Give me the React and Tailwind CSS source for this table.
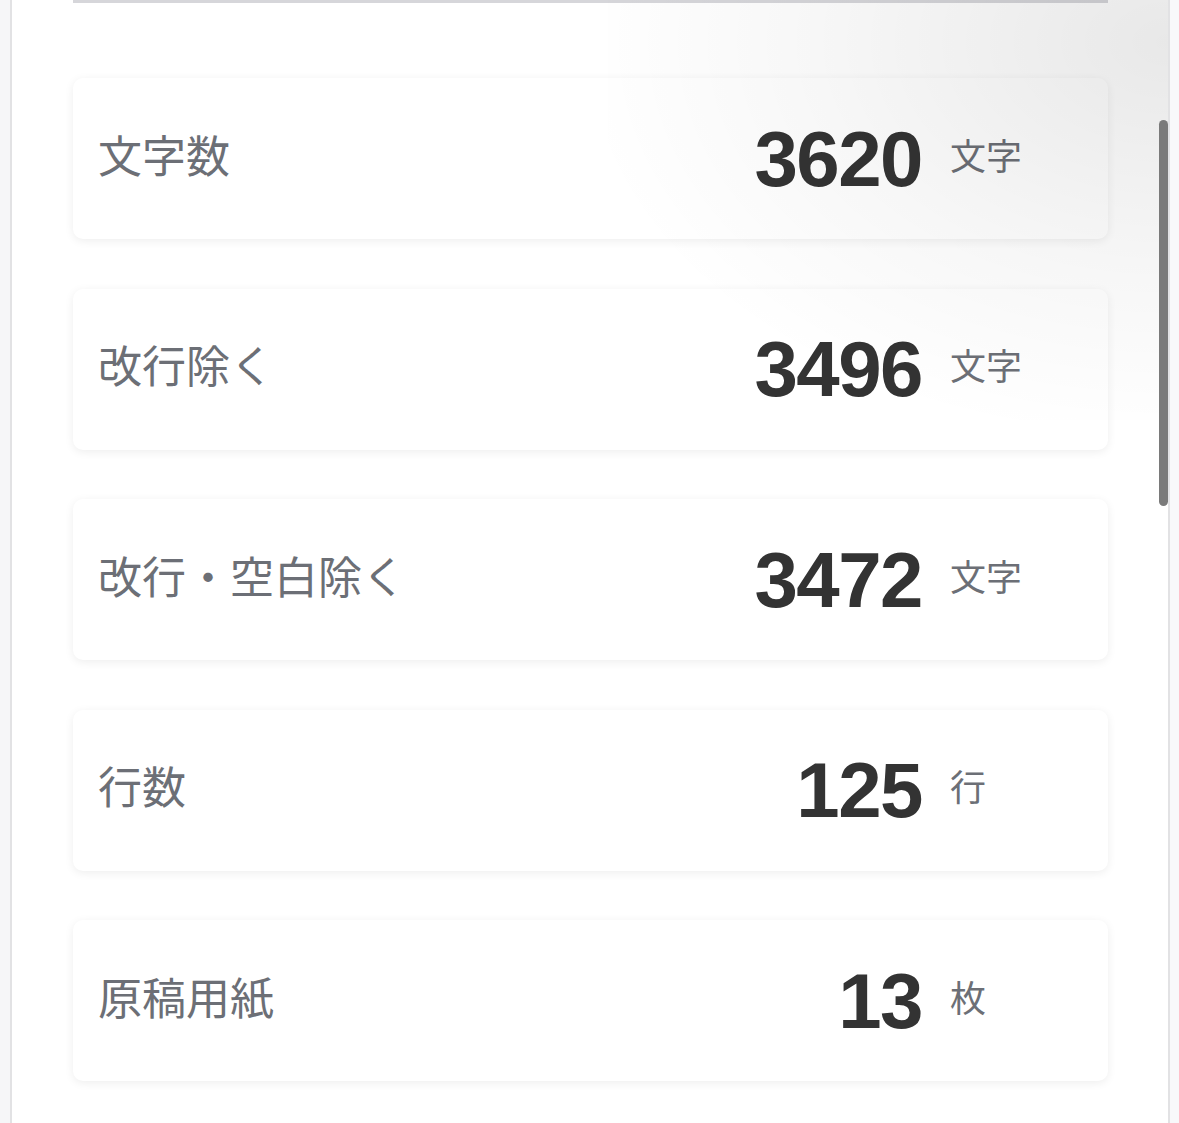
const stats = [
  { label: "文字数", value: "3620", unit: "文字" },
  { label: "改行除く", value: "3496", unit: "文字" },
  { label: "改行・空白除く", value: "3472", unit: "文字" },
  { label: "行数", value: "125", unit: "行" },
  { label: "原稿用紙", value: "13", unit: "枚" },
];

const StatCard = ({ label, value, unit }) => (
  <div className="flex h-[161px] items-center rounded-[10px] bg-white pl-[25px] shadow-[0_2px_10px_rgba(0,0,0,0.07)]">
    <div className="mb-[10px] flex-1 text-[44px] text-[#6c6f76] [font-family:'Noto_Sans_CJK_JP',sans-serif]">
      {label}
    </div>
    <div className="text-right text-[78px] font-bold leading-none tracking-[-1.5px] text-[#333333] [font-family:'Liberation_Sans',Arial,sans-serif]">
      {value}
    </div>
    <div className="mb-[10px] w-[186px] pl-[28px] text-[36px] text-[#6c6f76] [font-family:'Noto_Sans_CJK_JP',sans-serif]">
      {unit}
    </div>
  </div>
);

const App = () => {
  return (
    <div className="flex h-[1123px] w-[1179px] overflow-hidden bg-[#f6f6f8]">
      <div className="w-[10px]" />
      <div className="relative flex-1 border-x-2 border-[#e2e2e4] bg-white">
        <div className="ml-[61px] mr-[60px] h-[3px] bg-[#d6d6da]" />
        <div className="ml-[61px] mr-[60px] mt-[75px] flex flex-col gap-[49.5px]">
          {stats.map((s) => (
            <StatCard key={s.label} {...s} />
          ))}
        </div>
        <div className="pointer-events-none absolute right-0 top-0 h-[420px] w-[560px] bg-[radial-gradient(ellipse_at_100%_10%,rgba(0,0,0,0.09),rgba(0,0,0,0.03)_45%,transparent_75%)]" />
        <div className="absolute right-0 top-[120px] h-[386px] w-[9px] rounded-full bg-[#7a7a7a]" />
      </div>
      <div className="w-[9px] bg-[#f8f8fa]" />
    </div>
  );
};

export default App;
